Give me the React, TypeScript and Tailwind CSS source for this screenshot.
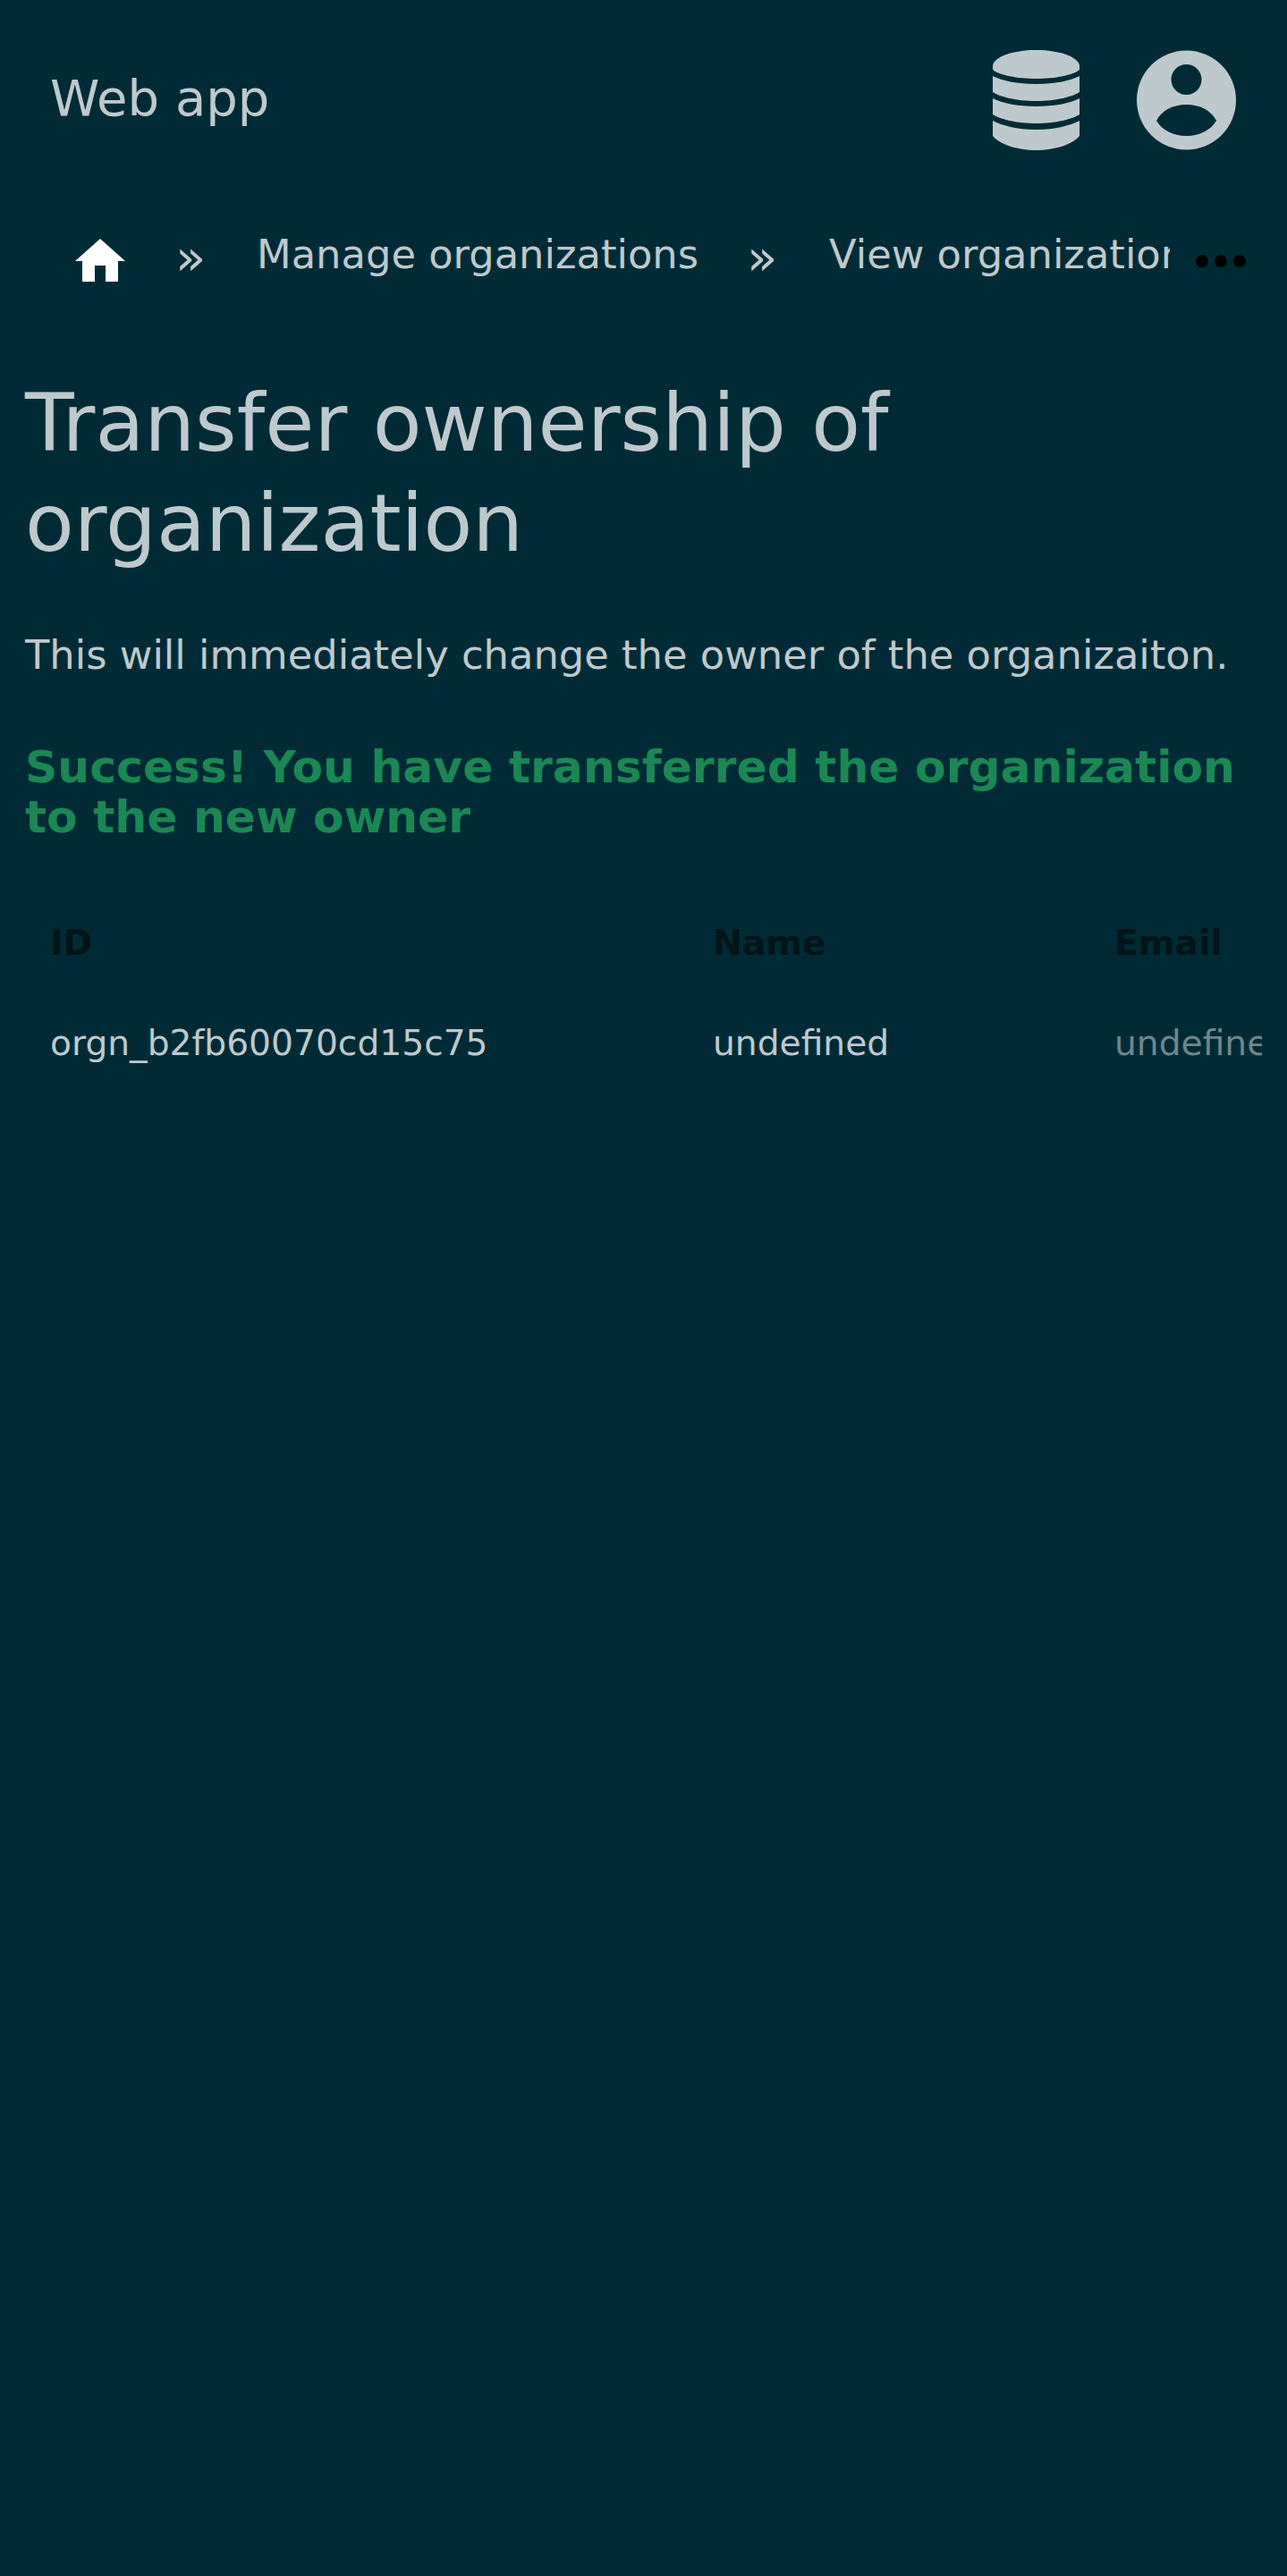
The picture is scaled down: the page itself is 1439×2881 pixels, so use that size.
const Header = () => {
  return (
    <header className="flex items-center justify-between h-[168px] pt-[56px] pl-[56px] pr-[56px]">
      <a className="text-[56px] leading-[112px] text-[#bec9cd] pb-[4px]">Web app</a>
      <div className="flex items-center gap-[64px]">
        <svg viewBox="0 0 97 112" className="w-[97px] h-[112px]" fill="#bec9cd">
          <path d="M0 18C0 8 22 0 48.5 0S97 8 97 18v4C90 28 70 32 48.5 32S7 28 0 22z" />
          <path d="M0 29C9 34 28 38 48.5 38S88 34 97 29V47C90 52 70 57 48.5 57S7 52 0 47z" />
          <path d="M0 54C9 59 28 63 48.5 63S88 59 97 54V72C90 77 70 82 48.5 82S7 77 0 72z" />
          <path d="M0 79C9 84 28 89 48.5 89S88 84 97 79V96C90 105 70 112 48.5 112S7 105 0 96z" />
        </svg>
        <svg viewBox="0 0 112 112" className="w-[112px] h-[112px]">
          <circle cx="55.5" cy="56" r="55.5" fill="#bec9cd" />
          <circle cx="55.5" cy="33" r="17" fill="#002b36" />
          <path d="M22 79C28 67 41 61 55.500 61S83 67 89 79C83 89 71 96 55.500 96S28 89 22 79z" fill="#002b36" />
        </svg>
      </div>
    </header>
  );
};

const Breadcrumb = () => {
  return (
    <nav className="flex items-center h-[120px] mt-[60px] pl-[84px]">
      <svg viewBox="0 0 56 48" className="w-[56px] h-[48px] mr-[56px] mt-[6px] shrink-0" fill="#ffffff">
        <path d="M28 0 56 25H48V48H34V30H22V48H8V25H0z" />
      </svg>
      <div className="w-[1112px] flex items-center overflow-hidden whitespace-nowrap text-[#bec9cd] text-[44.8px] leading-[72px]">
        <span className="w-[91px] shrink-0 text-[56px] leading-[72px]">»</span>
        <span className="shrink-0 pb-[6px]">Manage organizations</span>
        <span className="w-[92px] ml-[54px] shrink-0 text-[56px] leading-[72px]">»</span>
        <span className="shrink-0 pb-[6px]">View organization</span>
      </div>
      <div className="flex gap-[7px] ml-[29px] mt-[8px]">
        <span className="w-[14px] h-[14px] rounded-full bg-black" />
        <span className="w-[14px] h-[14px] rounded-full bg-black" />
        <span className="w-[14px] h-[14px] rounded-full bg-black" />
      </div>
    </nav>
  );
};

export default function App() {
  return (
    <main className="min-h-[2881px] bg-[#002b36] font-['DejaVu_Sans',sans-serif]">
      <Header />
      <Breadcrumb />
      <section className="px-[28px] mt-[69px]">
        <h1 className="text-[#bec9cd] text-[89.6px] leading-[112px]">Transfer ownership of organization</h1>
        <p className="text-[#bec9cd] text-[44.8px] leading-[72px] mt-[56px] whitespace-nowrap">This will immediately change the owner of the organizaiton.</p>
        <h3 className="text-[#1a8754] text-[50.4px] leading-[56px] font-bold mt-[61px]">Success! You have transferred the organization to the new owner</h3>
        <div className="mt-[57px] overflow-hidden w-[1383px]">
          <div className="grid grid-cols-[741px_449px_300px] pl-[28px] h-[112px] items-center text-[#00141a] text-[39.2px] font-bold">
            <div>ID</div>
            <div>Name</div>
            <div>Email</div>
          </div>
          <div className="grid grid-cols-[741px_449px_300px] pl-[28px] h-[112px] items-center text-[#bec9cd] text-[39.2px]">
            <div>orgn_b2fb60070cd15c75</div>
            <div>undefined</div>
            <div className="text-[#71868b]">undefined</div>
          </div>
        </div>
      </section>
    </main>
  );
}
